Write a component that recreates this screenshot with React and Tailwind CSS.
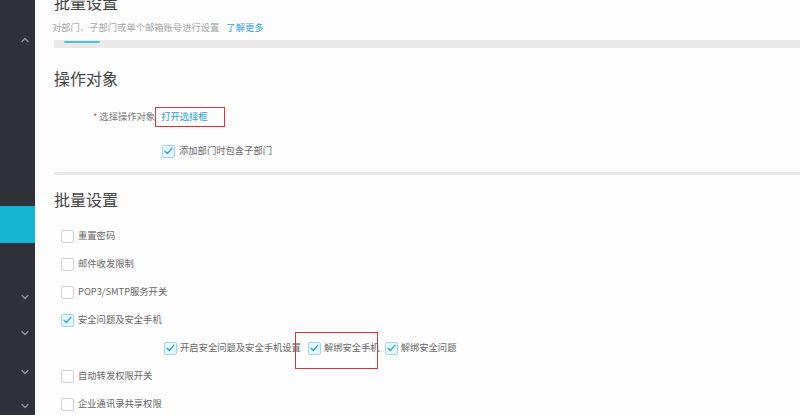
import React from "react";

const font = { fontFamily: '"Noto Sans CJK SC", "Noto Sans", sans-serif' };

function Box({ checked }) {
  if (checked) {
    return (
      <span className="w-[13px] h-[13px] shrink-0 rounded-[2px] border border-[#9fd7ea] bg-[#e6f6fb] flex items-center justify-center">
        <svg width="9" height="8" viewBox="0 0 9 8" fill="none">
          <path d="M1 4.2 L3.4 6.5 L8 1.2" stroke="#2c9fcf" strokeWidth="1.2" strokeLinecap="round" strokeLinejoin="round" />
        </svg>
      </span>
    );
  }
  return <span className="w-[13px] h-[13px] shrink-0 rounded-[2px] border border-[#d2d2d2] bg-white" />;
}

function Chevron({ up }) {
  return (
    <svg width="8" height="6" viewBox="0 0 8 6" fill="none">
      <path d={up ? "M1 4.5 L4 1.5 L7 4.5" : "M1 1.5 L4 4.5 L7 1.5"} stroke="#9a9ea4" strokeWidth="1.2" strokeLinecap="round" strokeLinejoin="round" />
    </svg>
  );
}

function Row({ checked, label }) {
  return (
    <div className="h-[28px] flex items-center ml-[7px] gap-[4px]">
      <Box checked={checked} />
      <span className="text-[9.3px] text-[#666]">{label}</span>
    </div>
  );
}

export default function App() {
  return (
    <div className="w-[800px] h-[415px] overflow-hidden flex bg-[#fdfdfd]" style={font}>
      <div className="w-[35px] shrink-0 bg-[#2f3238] flex flex-col">
        <div className="h-[37px] shrink-0" />
        <div className="h-[8px] shrink-0 flex justify-center pl-[14px]"><Chevron up /></div>
        <div className="h-[161px] shrink-0" />
        <div className="h-[37px] shrink-0 bg-[#14b4d2]" />
        <div className="h-[51px] shrink-0" />
        <div className="h-[8px] shrink-0 flex justify-center pl-[14px]"><Chevron /></div>
        <div className="h-[28px] shrink-0" />
        <div className="h-[8px] shrink-0 flex justify-center pl-[14px]"><Chevron /></div>
        <div className="h-[31px] shrink-0" />
        <div className="h-[8px] shrink-0 flex justify-center pl-[14px]"><Chevron /></div>
        <div className="h-[26px] shrink-0" />
        <div className="h-[8px] shrink-0 flex justify-center pl-[14px]"><Chevron /></div>
      </div>
      <div className="flex-1 pl-[19px] overflow-hidden">
        <div className="mt-[-8px] h-[20px] leading-[20px] text-[16px] text-[#444]">批量设置</div>
        <div className="mt-[8px] h-[14px] leading-[14px] text-[9.3px] text-[#a5a5a5] -ml-[2px]">
          对部门、子部门或单个邮箱账号进行设置<span className="ml-[7px] text-[#2aa0d4]">了解更多</span>
        </div>
        <div className="mt-[6px] h-[8px] bg-[#e9e9e9] relative">
          <div className="absolute left-[10px] top-[1px] w-[36px] h-[2px] bg-[#4cc4d8] rounded-full" />
        </div>
        <div className="mt-[20px] h-[20px] leading-[20px] text-[16px] text-[#444]">操作对象</div>
        <div className="mt-[19px] h-[20px] flex items-center ml-[39px] text-[9.3px]">
          <span className="text-[#e05a4a] mr-[2px]">*</span>
          <span className="text-[#777]">选择操作对象</span>
          <span className="h-[20px] w-[70px] border-[length:1.5px] border-[color:#d9343a] flex items-center pl-[5px] text-[#2aa0d4]">打开选择框</span>
        </div>
        <div className="mt-[17px] h-[14px] flex items-center ml-[108px] gap-[4px]">
          <Box checked />
          <span className="text-[9.3px] text-[#666]">添加部门时包含子部门</span>
        </div>
        <div className="mt-[14px] h-[3px] bg-[#e6e8ec]" />
        <div className="mt-[14px] h-[20px] leading-[20px] text-[16px] text-[#444]">批量设置</div>
        <div className="mt-[13px]">
          <Row label="重置密码" />
          <Row label="邮件收发限制" />
          <Row label="POP3/SMTP服务开关" />
          <Row checked label="安全问题及安全手机" />
          <div className="h-[28px] flex items-center ml-[110px] relative">
            <Box checked />
            <span className="ml-[3px] text-[9.3px] text-[#666]">开启安全问题及安全手机设置</span>
            <span className="ml-[7px]"><Box checked /></span>
            <span className="ml-[3px] text-[9.3px] text-[#666]">解绑安全手机</span>
            <span className="ml-[5px]"><Box checked /></span>
            <span className="ml-[3px] text-[9.3px] text-[#666]">解绑安全问题</span>
            <div className="absolute left-[131px] top-[-2px] w-[83px] h-[37px] border-[length:1.5px] border-[color:#d9343a]" />
          </div>
          <Row label="自动转发权限开关" />
          <Row label="企业通讯录共享权限" />
        </div>
      </div>
    </div>
  );
}
